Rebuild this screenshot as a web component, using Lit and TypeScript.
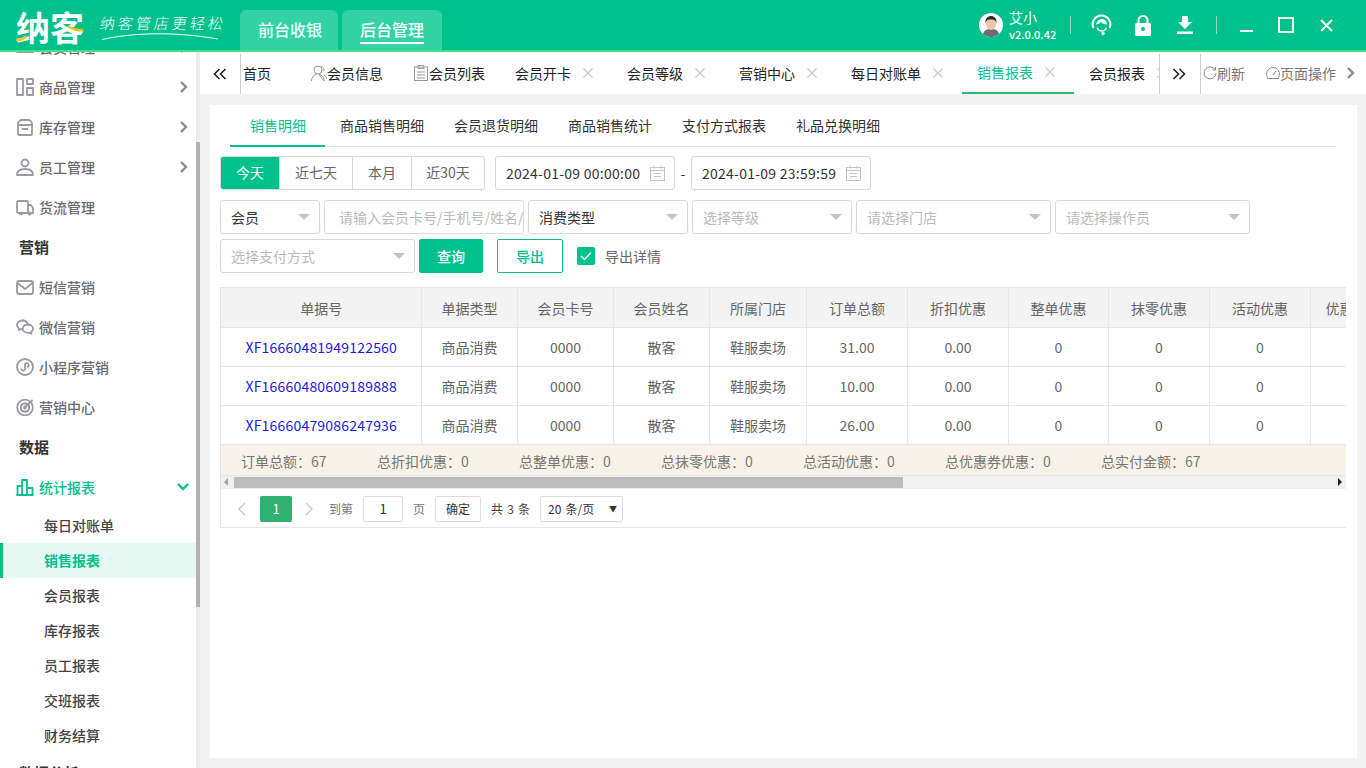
import { LitElement, html, css, svg } from 'lit';
import { customElement, state } from 'lit/decorators.js';

const GRAY = '#9a9aa3';

const stroke = (body: any, color = GRAY, size = 18) => html`<svg width=${size} height=${size} viewBox="0 0 18 18" fill="none" stroke=${color} stroke-width="1.800" stroke-linecap="round" stroke-linejoin="round">${body}</svg>`;

const sideIcons: Record<string, any> = {
    member: stroke(svg`<path d="M1 4h16M1 9h16M1 14h16"/>`),
    goods: stroke(svg`<rect x="1" y="1" width="6" height="16"/><rect x="11" y="1" width="6" height="5"/><rect x="11" y="10" width="6" height="7"/>`),
    stock: stroke(svg`<path d="M2 6a4 4 0 0 1 4-4h6a4 4 0 0 1 4 4v1H2z"/><path d="M2 7v9a1 1 0 0 0 1 1h12a1 1 0 0 0 1-1V7"/><path d="M6.500 11h5"/>`),
    staff: stroke(svg`<circle cx="9" cy="5" r="3.500"/><path d="M1 17c0-4 3-6 8-6s8 2 8 6z"/>`),
    truck: stroke(svg`<rect x="1" y="3" width="11" height="12" rx="1.500"/><path d="M12 7h3l2 3v5h-5"/><circle cx="5" cy="15.500" r="1.200"/><circle cx="13.500" cy="15.500" r="1.200"/>`),
    sms: stroke(svg`<rect x="1" y="3" width="16" height="13" rx="2"/><path d="M1.500 5l7.500 6 7.500-6"/>`),
    wechat: stroke(svg`<path d="M6.500 2.500C3.400 2.500 1 4.500 1 7c0 1.400.8 2.600 2 3.400L2.700 12l2-1c.4.100.9.200 1.400.200"/><path d="M12 6.500c-2.900 0-5.200 1.900-5.200 4.200s2.300 4.200 5.200 4.200c.6 0 1.100-.1 1.600-.2l1.900 1-.4-1.700c1.200-.8 1.900-2 1.900-3.300 0-2.300-2.200-4.200-5-4.200z"/><path d="M6.500 2.500c2.500 0 4.600 1.400 5.200 3.400"/>`),
    mini: stroke(svg`<circle cx="9" cy="9" r="8"/><path d="M5.500 11.500a2 2 0 0 0 3.500 0V6.500a2 2 0 1 1 2.700 2.400"/>`),
    target: stroke(svg`<circle cx="9" cy="9.500" r="7.800"/><circle cx="9" cy="9.500" r="4.200" stroke-width="2.200"/><circle cx="9" cy="9.500" r="1" fill=${GRAY}/><path d="M9 9.500l7-7"/>`),
    stats: stroke(svg`<path d="M1 17h16M1.500 17V8h4.500v9M6 17V2h5v15M11 17v-7h5.500v7"/>`, '#00c08d'),
};

const chev = (color = '#8a8a92') => html`<svg width="10" height="12" viewBox="0 0 10 12" fill="none" stroke=${color} stroke-width="2.400"><path d="M2 1l5 5-5 5"/></svg>`;
const calendar = html`<svg width="15" height="16" viewBox="0 0 15 16" fill="none" stroke="#c4c4c4"><rect x=".5" y="2.500" width="14" height="13"/><path d="M4 .5v3M11 .5v3M.5 5.500h14M4 8.500h7M4 11.500h7"/></svg>`;

interface SideRow { kind: 'item' | 'title' | 'sub'; label: string; icon?: string; more?: boolean; on?: boolean; }

const sideRows: SideRow[] = [
    { kind: 'item', label: '会员管理', icon: 'member', more: true },
    { kind: 'item', label: '商品管理', icon: 'goods', more: true },
    { kind: 'item', label: '库存管理', icon: 'stock', more: true },
    { kind: 'item', label: '员工管理', icon: 'staff', more: true },
    { kind: 'item', label: '货流管理', icon: 'truck' },
    { kind: 'title', label: '营销' },
    { kind: 'item', label: '短信营销', icon: 'sms' },
    { kind: 'item', label: '微信营销', icon: 'wechat' },
    { kind: 'item', label: '小程序营销', icon: 'mini' },
    { kind: 'item', label: '营销中心', icon: 'target' },
    { kind: 'title', label: '数据' },
    { kind: 'item', label: '统计报表', icon: 'stats', on: true },
    { kind: 'sub', label: '每日对账单' },
    { kind: 'sub', label: '销售报表', on: true },
    { kind: 'sub', label: '会员报表' },
    { kind: 'sub', label: '库存报表' },
    { kind: 'sub', label: '员工报表' },
    { kind: 'sub', label: '交班报表' },
    { kind: 'sub', label: '财务结算' },
    { kind: 'title', label: '数据分析' },
];

const pageTabs = [
    { label: '首页', cls: 'home' },
    { label: '会员信息', icon: 'user', cls: 'plain wide' },
    { label: '会员列表', icon: 'list', cls: 'plain' },
    { label: '会员开卡', close: true },
    { label: '会员等级', close: true },
    { label: '营销中心', close: true },
    { label: '每日对账单', close: true },
    { label: '销售报表', close: true, on: true },
    { label: '会员报表', close: true },
];

const columns: [string, number][] = [
    ['单据号', 200], ['单据类型', 96], ['会员卡号', 96], ['会员姓名', 96], ['所属门店', 97],
    ['订单总额', 101], ['折扣优惠', 101], ['整单优惠', 100], ['抹零优惠', 101], ['活动优惠', 101], ['优惠券优惠', 100],
];

const rows = [
    ['XF16660481949122560', '商品消费', '0000', '散客', '鞋服卖场', '31.00', '0.00', '0', '0', '0', ''],
    ['XF16660480609189888', '商品消费', '0000', '散客', '鞋服卖场', '10.00', '0.00', '0', '0', '0', ''],
    ['XF16660479086247936', '商品消费', '0000', '散客', '鞋服卖场', '26.00', '0.00', '0', '0', '0', ''],
];

const totals: [string, number][] = [
    ['订单总额：67', 136], ['总折扣优惠：0', 142], ['总整单优惠：0', 142], ['总抹零优惠：0', 142],
    ['总活动优惠：0', 142], ['总优惠券优惠：0', 156], ['总实付金额：67', 110],
];

@customElement('app-root')
export class AppRoot extends LitElement {
    @state() activeReport = '销售明细';

    static styles = css`
        :host {
            display: block;
            width: 1366px;
            height: 768px;
            overflow: hidden;
            font-family: "Noto Sans CJK SC", "Noto Sans", sans-serif;
            font-size: 14px;
            color: #333;
            background: #f3f3f3;
        }
        .top {
            height: 50px;
            background: #00c08c;
            border-bottom: 2px solid #4cdc84;
            display: flex;
            color: #fff;
        }
        .logo { width: 240px; display: flex; align-items: center; position: relative; flex: none; }
        .brand { margin: 3px 0 0 16px; font-size: 34px; font-weight: 700; line-height: 40px; width: 72px; }
        .brand-mark { position: absolute; left: 15px; top: 26px; }
        .slogan { margin: -4px 0 0 12px; font-size: 15px; letter-spacing: 3px; font-weight: 300; line-height: 20px; transform: skewX(-10deg); white-space: nowrap; }
        .swoosh { position: absolute; left: 102px; top: 32px; }
        .modes { display: flex; gap: 4px; align-items: flex-end; }
        .mode {
            height: 40px;
            background: #33d3a6;
            border-radius: 6px 6px 0 0;
            display: flex;
            align-items: center;
            justify-content: center;
            font-size: 16px;
            width: 98px;
            box-sizing: border-box;
            padding: 0 0 2px 2px;
            color: #eafff8;
            font-weight: 500;
        }
        .mode.on { width: 100px; color: #fff; padding: 0; }
        .mode.on span { border-bottom: 2px solid #fff; line-height: 22px; height: 24px; margin-top: 2px; }
        .tools { margin-left: auto; margin-right: 33px; display: flex; align-items: center; height: 50px; }
        .avatar { margin-right: 6px; display: block; }
        .who { width: 61px; line-height: 16px; }
        .who b { display: block; font-weight: 400; font-size: 14px; line-height: 18px; margin-top: -1px; }
        .who small { display: block; font-size: 11px; font-weight: 500; line-height: 16px; }
        .vline { width: 1px; height: 18px; background: rgba(255, 255, 255, .55); }
        .tool { display: flex; justify-content: center; align-items: center; flex: none; }
        .t-head { width: 60px; }
        .t-lock { width: 20px; margin-left: 2px; }
        .t-down { width: 20px; margin: 0 21px 0 22px; }
        .t-min { width: 58px; }
        .t-min svg { margin-top: 4px; }
        .t-max { width: 22px; }
        .t-close { width: 14px; margin-left: 22px; }

        .body { display: flex; height: 716px; }
        .side { width: 196px; background: #fff; overflow: hidden; flex: none; }
        .side-in { margin-top: -25px; }
        .row { display: flex; align-items: center; height: 40px; padding: 0 7px 0 16px; color: #6a6a70; font-weight: 500; box-sizing: border-box; }
        .row > svg { margin-right: 5px; flex: none; }
        .row .more { margin-left: auto; display: flex; }
        .row.on { color: #00c08c; height: 41px; padding-bottom: 1px; }
        .title { height: 40px; line-height: 40px; padding-left: 19px; font-size: 15px; font-weight: 700; color: #333; }
        .sub { height: 35px; line-height: 35px; padding-left: 44px; font-weight: 500; color: #444; }
        .sub.on { background: #e8f9f3; color: #00c08c; font-weight: 700; border-left: 3px solid #00c08c; padding-left: 41px; }
        .track { width: 4px; flex: none; background: #ececec; position: relative; }
        .thumb { position: absolute; left: 0; top: 90px; width: 4px; height: 465px; background: #b2b2b2; }

        .main { flex: 1; min-width: 0; display: flex; flex-direction: column; }
        .tabbar { height: 42px; background: #fff; display: flex; align-items: flex-start; flex: none; }
        .arrow { display: flex; align-items: center; justify-content: center; flex: none; height: 40px; margin-top: 2px; }
        .arrow.left { width: 40px; border-right: 1px solid #cfcfcf; }
        .arrow.right { border-left: 1px solid #cfcfcf; border-right: 1px solid #cfcfcf; padding-right: 2px; width: 38px; }
        .strip { width: 918px; overflow: hidden; flex: none; display: flex; }
        .strip-in { display: flex; margin-left: -13px; flex: none; }
        .tab { display: flex; align-items: center; padding: 0 18px 0 15px; height: 42px; box-sizing: border-box; white-space: nowrap; color: #222; flex: none; }
        .tab.home { padding-right: 25px; }
        .tab.plain { padding-right: 15px; }
        .tab.wide { padding-right: 16px; }
        .tab.on { color: #00c08c; border-bottom: 2px solid #2fb673; }
        .tab .list-icon { margin-right: 1px; }
        .x { margin-left: 11px; width: 12px; height: 12px; display: block; flex: none; }
        .acts { display: flex; align-items: center; color: #777; height: 42px; padding-left: 2px; white-space: nowrap; }
        .acts span { margin-right: 21px; }
        .acts svg { flex: none; }
        .acts .last { margin-right: 10px; }

        .content { flex: 1; padding: 11px 9px 10px 10px; min-height: 0; display: flex; }
        .card { background: #fff; flex: 1; min-width: 0; padding: 0 11px 0 10px; }
        .reports { display: flex; height: 41px; border-bottom: 1px solid #e6e6e6; margin: 0 0 9px 10px; width: 1106px; }
        .report { padding: 0 15px; line-height: 41px; height: 41px; box-sizing: border-box; color: #333; }
        .report:first-child { padding: 0 19px 0 20px; }
        .report.on { color: #00c08c; border-bottom: 2px solid #00c08c; height: 42px; }
        .filters { display: flex; flex-direction: column; }
        .line { display: flex; align-items: center; }
        .line.second { margin-top: 10px; }
        .line.third { margin-top: 5px; }
        .group { display: flex; height: 34px; border: 1px solid #d9d9d9; border-radius: 3px; box-sizing: border-box; overflow: hidden; width: 265px; }
        .group div { display: flex; align-items: center; justify-content: center; color: #666; border-left: 1px solid #d9d9d9; box-sizing: border-box; padding-bottom: 2px; }
        .group div:first-child { border-left: 0; }
        .group .on { background: #00c08c; color: #fff; }
        .box { height: 34px; box-sizing: border-box; border: 1px solid #d9d9d9; border-radius: 3px; display: flex; align-items: center; padding: 0 10px 1px; white-space: nowrap; overflow: hidden; color: #bbb; flex: none; }
        .box.val { color: #333; }
        .box.search { width: 200px; margin-left: 4px; padding-left: 14px; }
        .box .caret { margin-left: auto; width: 0; height: 0; border-left: 6px solid transparent; border-right: 6px solid transparent; border-top: 6px solid #c4c4c4; flex: none; margin-right: -1px; }
        .date { width: 180px; color: #333; letter-spacing: .25px; padding-bottom: 0; }
        .date.first { margin-left: 10px; }
        .date svg { margin-left: auto; margin-right: -1px; }
        .dash { width: 16px; text-align: center; color: #333; }
        .btn { height: 34px; box-sizing: border-box; border-radius: 2px; display: flex; align-items: center; justify-content: center; border: 1px solid #00c08c; flex: none; font-weight: 500; }
        .btn.fill { background: #00c08c; color: #fff; width: 64px; margin-left: 4px; }
        .btn.line-btn { color: #00c08c; background: #fff; width: 66px; margin-left: 14px; }
        .check { width: 18px; height: 18px; background: #00c08c; border-radius: 2px; display: flex; align-items: center; justify-content: center; margin: 0 10px 0 14px; flex: none; }
        .check-label { color: #666; }

        .grid-wrap { margin-top: 14px; border: 1px solid #e6e6e6; border-right: 0; box-sizing: border-box; overflow: hidden; width: 1126px; height: 241px; }
        table { border-collapse: collapse; table-layout: fixed; width: 1189px; }
        th, td { height: 39px; padding: 0 0 0 1px; box-sizing: border-box; text-align: center; border-right: 1px solid #e6e6e6; border-bottom: 1px solid #e6e6e6; color: #666; font-weight: 400; white-space: nowrap; overflow: hidden; }
        th { background: #f3f3f3; padding-top: 2px; }
        td a { color: #1a1ae6; text-decoration: none; letter-spacing: .2px; }
        .totals { display: flex; height: 31px; background: #f7f3e8; align-items: center; padding: 2px 0 0 20px; color: #777; border-bottom: 1px solid #e6e6e6; box-sizing: border-box; }
        .totals span { flex: none; white-space: nowrap; }
        .hbar { height: 13px; background: #f1f1f1; display: flex; align-items: center; }
        .hbar i { display: block; width: 0; height: 0; border-top: 4px solid transparent; border-bottom: 4px solid transparent; flex: none; }
        .hbar .l { border-right: 4px solid #a3a3a3; margin-left: 3px; }
        .hbar .r { border-left: 4px solid #222; margin-left: auto; margin-right: 4px; }
        .hbar .bar { margin-left: 6px; width: 669px; height: 11px; background: #bdbdbd; }
        .pager { height: 40px; box-sizing: border-box; padding: 0 0 0 16px; display: flex; align-items: center; color: #777; font-size: 12px; }
        .pager > * { flex: none; }
        .pager .next { margin-right: 15px; }
        .cur { width: 32px; height: 26px; background: #2fb26f; color: #fff; display: flex; align-items: center; justify-content: center; border-radius: 2px; margin: 0 12px 0 13px; font-size: 13px; }
        .ninput, .ok, .size { height: 26px; box-sizing: border-box; border: 1px solid #dcdcdc; border-radius: 2px; display: flex; align-items: center; justify-content: center; color: #333; }
        .ninput { width: 40px; margin: 0 10px; font-size: 13px; }
        .ok { width: 46px; margin: 0 10px; }
        .count { color: #444; word-spacing: 1.500px; }
        .size { width: 83px; margin-left: 10px; justify-content: space-between; padding: 0 5px 0 7px; font-size: 12px; word-spacing: 1.500px; }
        .size em { font-style: normal; font-size: 8px; }
    `;

    renderTop() {
        return html`
            <div class="top">
                <div class="logo">
                    <div class="brand">纳客</div>
                    <svg class="brand-mark" width="72" height="16" viewBox="0 0 72 16" fill="none" stroke="#f5c518" stroke-width="2.500" stroke-linecap="round"><path d="M2 14q5 0 8-3"/><path d="M54 1q7 4 13 3"/></svg>
                    <div class="slogan">纳客管店更轻松</div>
                    <svg class="swoosh" width="118" height="9" viewBox="0 0 118 9" fill="none" stroke="#fff" stroke-width="1"><path d="M0 7.500C30 1 70 -1 116 7"/></svg>
                </div>
                <div class="modes">
                    <div class="mode"><span>前台收银</span></div>
                    <div class="mode on"><span>后台管理</span></div>
                </div>
                <div class="tools">
                    <svg class="avatar" width="24" height="24" viewBox="0 0 24 24"><circle cx="12" cy="12" r="12" fill="#fff"/><path d="M4 21c1-4 4-5 8-5s7 1 8 5a12 12 0 0 1-16 0z" fill="#6d6d72"/><ellipse cx="12" cy="11" rx="5" ry="6" fill="#efc6a8"/><path d="M6.500 10c-.5-5 2.500-7 5.500-7s6 2 5.500 7c-1-2.500-2-3.500-5.500-3.500S7.500 7.500 6.500 10z" fill="#33302e"/></svg>
                    <div class="who"><b>艾小</b><small>v2.0.0.42</small></div>
                    <div class="vline"></div>
                    <div class="tool t-head">
                        <svg width="21" height="22" viewBox="0 0 21 22" fill="none" stroke="#fff"><path d="M2.500 14A8.800 8.800 0 1 1 18.500 14" stroke-width="2"/><path d="M5 10.500c.5-3 3-5.500 6-5.500 3 0 5 2.500 5 5.500-3 0-5-1-6-3-1 2-3 3-5 3z" fill="#fff" stroke="none"/><path d="M6 13.500c1 2.500 3 3.500 5 3.500s3.500-1 4.500-3" stroke-width="1.500"/><circle cx="12" cy="19.500" r="1.700" fill="#fff" stroke="none"/></svg>
                    </div>
                    <div class="tool t-lock">
                        <svg width="16" height="21" viewBox="0 0 16 21"><path d="M3.500 8V5.500a4.500 4.500 0 0 1 9 0V8" fill="none" stroke="#fff" stroke-width="2"/><rect y="8" width="16" height="13" rx="1.500" fill="#fff"/><circle cx="8" cy="14" r="2" fill="#00c08c"/></svg>
                    </div>
                    <div class="tool t-down">
                        <svg width="16" height="18" viewBox="0 0 16 18" fill="#fff"><path d="M5 0h6v6h4l-7 7-7-7h4z"/><rect y="15.500" width="16" height="2.500"/></svg>
                    </div>
                    <div class="vline"></div>
                    <div class="tool t-min">
                        <svg width="13" height="12" viewBox="0 0 13 12"><rect y="9" width="13" height="2" fill="#fff"/></svg>
                    </div>
                    <div class="tool t-max">
                        <svg width="16" height="16" viewBox="0 0 16 16" fill="none" stroke="#f2fbe8" stroke-width="2"><rect x="1" y="1" width="14" height="14"/></svg>
                    </div>
                    <div class="tool t-close">
                        <svg width="13" height="13" viewBox="0 0 13 13" stroke="#fff" stroke-width="2"><path d="M1 1l11 11M12 1L1 12"/></svg>
                    </div>
                </div>
            </div>
        `;
    }

    renderSide() {
        return html`
            <div class="side"><div class="side-in">
                ${sideRows.map((r) => {
                    if (r.kind === 'title') return html`<div class="title">${r.label}</div>`;
                    if (r.kind === 'sub') return html`<div class="sub ${r.on ? 'on' : ''}">${r.label}</div>`;
                    return html`<div class="row ${r.on ? 'on' : ''}">
                        ${sideIcons[r.icon!]}<span>${r.label}</span>
                        ${r.more ? html`<span class="more">${chev()}</span>` : ''}
                        ${r.on ? html`<span class="more"><svg width="12" height="10" viewBox="0 0 12 10" fill="none" stroke="#00c08c" stroke-width="2.400"><path d="M1 2l5 5 5-5"/></svg></span>` : ''}
                    </div>`;
                })}
            </div></div>
            <div class="track"><div class="thumb"></div></div>
        `;
    }

    tabIcon(name?: string) {
        if (name === 'user') return html`<svg width="16" height="17" viewBox="0 0 16 17" fill="none" stroke="#999"><circle cx="7" cy="5" r="4"/><path d="M.5 16c0-4 2.500-6 5-6.500M8 9.500c3 .5 5 2.500 5 6.500zM10 1.500c2 .5 3.500 2 3 4.500M13 10c1.500.5 2.500 2 2.500 4"/></svg>`;
        if (name === 'list') return html`<svg class="list-icon" width="14" height="16" viewBox="0 0 14 16" fill="none" stroke="#999"><rect x=".5" y="2" width="13" height="13.500"/><path d="M4 .5h6v3H4zM3 7h8M3 10h8M3 13h8"/></svg>`;
        return '';
    }

    renderTabs() {
        return html`
            <div class="tabbar">
                <div class="arrow left"><svg width="14" height="12" viewBox="0 0 14 12" fill="none" stroke="#222" stroke-width="1.600"><path d="M6.500 1l-5 5 5 5M12.500 1l-5 5 5 5"/></svg></div>
                <div class="strip"><div class="strip-in">
                    ${pageTabs.map((t) => html`<div class="tab ${t.cls ?? ''} ${t.on ? 'on' : ''}">
                        ${this.tabIcon(t.icon)}<span>${t.label}</span>
                        ${t.close ? html`<svg class="x" viewBox="0 0 12 12" stroke="#c8c8c8" stroke-width="1.200"><path d="M1.500 1.500l9 9M10.500 1.500l-9 9"/></svg>` : ''}
                    </div>`)}
                </div></div>
                <div class="arrow right"><svg width="14" height="12" viewBox="0 0 14 12" fill="none" stroke="#222" stroke-width="1.600"><path d="M1.500 1l5 5-5 5M7.500 1l5 5-5 5"/></svg></div>
                <div class="acts">
                    <svg width="14" height="14" viewBox="0 0 14 14" fill="none" stroke="#888"><path d="M12 3.500A6 6 0 1 0 13 7M12.500 1v3h-3"/></svg>
                    <span>刷新</span>
                    <svg width="14" height="14" viewBox="0 0 14 14" fill="none" stroke="#888"><path d="M1.500 11.500A6.500 6.500 0 1 1 12.500 11.500M1 12.500h12M7 9l3-4"/></svg>
                    <span class="last">页面操作</span>
                    ${chev()}
                </div>
            </div>
        `;
    }

    renderFilters() {
        const quick: [string, number, boolean][] = [['今天', 58, true], ['近七天', 73, false], ['本月', 59, false], ['近30天', 73, false]];
        const sel = (label: string, width: number, ml: number, val = false) => html`
            <div class="box ${val ? 'val' : ''}" style="width:${width}px;margin-left:${ml}px"><span>${label}</span><i class="caret"></i></div>`;
        return html`
            <div class="filters">
                <div class="line">
                    <div class="group">${quick.map(([q, w, on]) => html`<div class=${on ? 'on' : ''} style="width:${w}px">${q}</div>`)}</div>
                    <div class="box date first">2024-01-09 00:00:00 ${calendar}</div>
                    <div class="dash">-</div>
                    <div class="box date">2024-01-09 23:59:59 ${calendar}</div>
                </div>
                <div class="line second">
                    ${sel('会员', 100, 0, true)}
                    <div class="box search"><span>请输入会员卡号/手机号/姓名/</span></div>
                    ${sel('消费类型', 160, 4, true)}
                    ${sel('选择等级', 160, 4)}
                    ${sel('请选择门店', 195, 4)}
                    ${sel('请选择操作员', 195, 4)}
                </div>
                <div class="line third">
                    ${sel('选择支付方式', 195, 0)}
                    <div class="btn fill">查询</div>
                    <div class="btn line-btn">导出</div>
                    <div class="check"><svg width="12" height="10" viewBox="0 0 12 10" fill="none" stroke="#fff" stroke-width="1.400"><path d="M1 5l3.500 3.500L11 1.500"/></svg></div>
                    <span class="check-label">导出详情</span>
                </div>
            </div>
        `;
    }

    renderTable() {
        return html`
            <div class="grid-wrap">
                <table>
                    <colgroup>${columns.map(([, w]) => html`<col style="width:${w}px">`)}</colgroup>
                    <thead><tr>${columns.map(([c]) => html`<th>${c}</th>`)}</tr></thead>
                    <tbody>
                        ${rows.map((r) => html`<tr>${r.map((v, i) => html`<td>${i === 0 ? html`<a>${v}</a>` : v}</td>`)}</tr>`)}
                    </tbody>
                </table>
                <div class="totals">${totals.map(([t, w]) => html`<span style="width:${w}px">${t}</span>`)}</div>
                <div class="hbar"><i class="l"></i><div class="bar"></div><i class="r"></i></div>
                <div class="pager">
                    <svg width="10" height="14" viewBox="0 0 10 14" fill="none" stroke="#c8c8c8" stroke-width="1.300"><path d="M8 1L2 7l6 6"/></svg>
                    <div class="cur">1</div>
                    <svg class="next" width="10" height="14" viewBox="0 0 10 14" fill="none" stroke="#c8c8c8" stroke-width="1.300"><path d="M2 1l6 6-6 6"/></svg>
                    <span>到第</span>
                    <div class="ninput">1</div>
                    <span>页</span>
                    <div class="ok">确定</div>
                    <span class="count">共 3 条</span>
                    <div class="size"><span>20 条/页</span><em>▼</em></div>
                </div>
            </div>
        `;
    }

    render() {
        const reports = ['销售明细', '商品销售明细', '会员退货明细', '商品销售统计', '支付方式报表', '礼品兑换明细'];
        return html`
            ${this.renderTop()}
            <div class="body">
                ${this.renderSide()}
                <div class="main">
                    ${this.renderTabs()}
                    <div class="content">
                        <div class="card">
                            <div class="reports">${reports.map((r) => html`<div class="report ${r === this.activeReport ? 'on' : ''}">${r}</div>`)}</div>
                            ${this.renderFilters()}
                            ${this.renderTable()}
                        </div>
                    </div>
                </div>
            </div>
        `;
    }
}
